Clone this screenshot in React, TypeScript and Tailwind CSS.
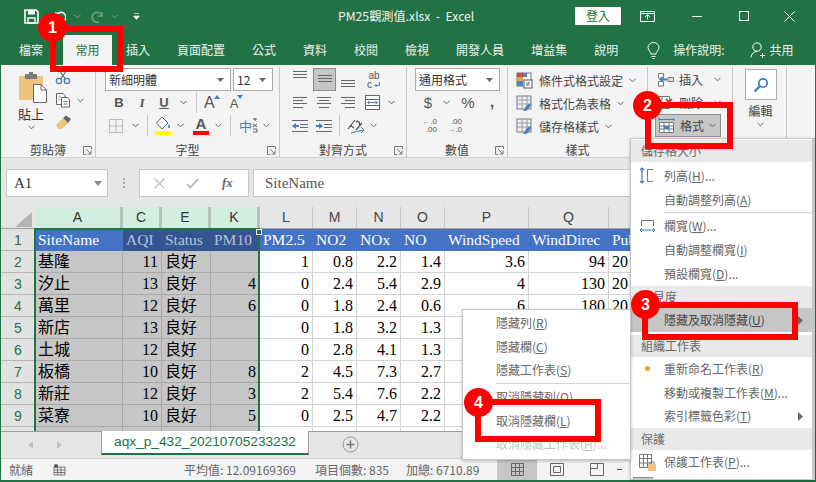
import type { ReactNode } from 'react';

const rows = [
  ['基隆', '11', '良好', '', '1', '0.8', '2.2', '1.4', '3.6', '94', '20'],
  ['汐止', '13', '良好', '4', '0', '2.4', '5.4', '2.9', '4', '130', '20'],
  ['萬里', '12', '良好', '6', '0', '1.8', '2.4', '0.6', '6', '180', '20'],
  ['新店', '13', '良好', '', '0', '1.8', '3.2', '1.3', '', '', ''],
  ['土城', '12', '良好', '', '0', '2.8', '4.1', '1.3', '', '', ''],
  ['板橋', '10', '良好', '8', '2', '4.5', '7.3', '2.7', '', '', ''],
  ['新莊', '12', '良好', '3', '2', '5.4', '7.6', '2.2', '', '', ''],
  ['菜寮', '10', '良好', '5', '0', '2.5', '4.7', '2.2', '', '', ''],
  ['', '', '', '', '', '', '', '', '', '', ''],
];
const headers = ['SiteName', 'AQI', 'Status', 'PM10', 'PM2.5', 'NO2', 'NOx', 'NO', 'WindSpeed', 'WindDirec', 'Publ'];
const columns = ['A', 'C', 'E', 'K', 'L', 'M', 'N', 'O', 'P', 'Q', ''];
const gridCols = 'grid grid-cols-[34px_88px_39px_49px_49px_53px_44px_44px_44px_84px_80px_207px]';

function Chev({ className = '' }: { className?: string }) {
  return (
    <svg width="7" height="5" viewBox="0 0 7 5" className={`shrink-0 ${className}`}>
      <path d="M0.5 0.8 L3.5 3.8 L6.5 0.8" fill="none" stroke="#666" strokeWidth="1" />
    </svg>
  );
}

function Launcher() {
  return (
    <svg width="9" height="9" viewBox="0 0 9 9" className="shrink-0">
      <path d="M0.5 8.5 V0.5 H8.5 M0.5 8.5 H3 M8.5 0.5 V3 M3 3 L8 8 M8 4.5 V8 H4.5" fill="none" stroke="#777" />
    </svg>
  );
}

// horizontal text-align strokes: [x1, x2, y]
function Lines({ h = 23, r }: { h?: number; r: [number, number, number][] }) {
  return (
    <svg width="14" height={h} viewBox={`0 0 14 ${h}`} className="shrink-0">
      {r.map(([a, b, y], i) => (
        <line key={i} x1={a} x2={b} y1={y + 0.5} y2={y + 0.5} stroke="#666" />
      ))}
    </svg>
  );
}

function Group({ w, label, launcher, children }: { w: string; label?: string; launcher?: boolean; children: ReactNode }) {
  return (
    <div className={`${w} shrink-0 h-[90px] flex flex-col border-r border-[#c8c8c8] relative`}>
      <div className="h-[74px] shrink-0">{children}</div>
      <div className="flex-1 flex items-center justify-center text-[12px] text-[#444] pb-[1px]">{label}</div>
      {launcher && (
        <div className="absolute right-[3px] bottom-[2px]">
          <Launcher />
        </div>
      )}
    </div>
  );
}

function Combo({ w, text }: { w: string; text: string }) {
  return (
    <div className={`${w} h-[23px] bg-white border border-[#ababab] flex items-center justify-between pl-[3px] pr-[6px] text-[12px] text-[#333]`}>
      <span>{text}</span>
      <svg width="7" height="4" viewBox="0 0 7 4"><path d="M0 0 H7 L3.5 4 Z" fill="#666" /></svg>
    </div>
  );
}

function Sep() {
  return <div className="w-px h-[21px] bg-[#c8c8c8] shrink-0" />;
}

function ColorA({ color, big }: { color?: string; big?: boolean }) {
  return (
    <div className="relative flex flex-col items-center w-[16px] leading-none">
      <span className={`${big ? 'text-[15px]' : 'text-[13px]'} text-[#555] font-semibold font-['Liberation_Sans',sans-serif]`}>A</span>
      {color && <div className="w-[16px] h-[4px]" style={{ background: color }} />}
    </div>
  );
}

function StyleIcon({ variant }: { variant: number }) {
  return (
    <svg width="17" height="17" viewBox="0 0 17 17" className="shrink-0">
      <rect x="1" y="1" width="14" height="13" fill={variant === 0 ? '#fff' : '#eef2f8'} stroke="#777" />
      {variant === 0 ? (
        <>
          <rect x="1" y="1" width="6" height="4" fill="#c0504d" />
          <rect x="7" y="1" width="4" height="4" fill="#4a86c8" />
          <rect x="1" y="5" width="6" height="4" fill="#f0a030" />
          <rect x="1" y="9" width="6" height="5" fill="#4a86c8" />
          <rect x="8" y="8" width="8" height="8" fill="#fff" stroke="#555" />
          <path d="M10 11 H14 M10 13 H14 M13 10 L11 14" stroke="#555" strokeWidth="0.7" />
        </>
      ) : (
        <>
          <path d="M1 5 H15 M1 9 H15 M6 1 V14 M11 1 V14" stroke="#9a9a9a" />
          <path d="M7 16 L11 10 L15 8 L14 12 L10 16 Z" fill="#3f7fc0" />
        </>
      )}
    </svg>
  );
}

function Ribbon() {
  return (
    <div className="h-[93px] shrink-0 bg-[#f3f3f3] border-b border-[#d2d2d2] flex pt-[2px] text-[#444]">
      <Group w="w-[95px]" label="剪貼簿" launcher>
        <div className="flex pl-[17px] pt-[5px]">
          <div className="w-[36px] flex flex-col items-start">
            <svg width="30" height="31" viewBox="0 0 30 31">
              <rect x="1" y="4" width="24" height="24" rx="1" fill="#eec37f" />
              <rect x="7" y="2" width="12" height="5" fill="#7a7a7a" />
              <rect x="11" y="0" width="4" height="3" fill="#7a7a7a" />
              <path d="M15.5 12.5 H23 L28.5 18 V30.5 H15.5 Z" fill="#fff" stroke="#666" />
              <path d="M23 12.5 V18 H28.5" fill="none" stroke="#666" />
            </svg>
            <span className="text-[13px] leading-[16px] mt-[3px] text-[#333]">貼上</span>
            <Chev className="ml-[10px] mt-[3px]" />
          </div>
          <div className="flex flex-col gap-[7px] ml-[1px] -mt-[3px]">
            <svg width="16" height="16" viewBox="0 0 16 16">
              <circle cx="4" cy="12" r="2.6" fill="none" stroke="#3f7fc0" strokeWidth="1.4" />
              <circle cx="12" cy="12" r="2.6" fill="none" stroke="#3f7fc0" strokeWidth="1.4" />
              <path d="M5.5 10 L12 1 M10.5 10 L4 1" stroke="#666" strokeWidth="1.2" />
            </svg>
            <div className="flex items-center gap-[6px]">
              <svg width="16" height="16" viewBox="0 0 16 16">
                <path d="M1.5 1.5 H8 L10 3.5 V12.5 H1.5 Z" fill="#fff" stroke="#666" />
                <path d="M6.5 5.5 H12.5 L14.5 7.5 V15 H6.5 Z" fill="#fff" stroke="#666" />
                <path d="M8.5 9.5 H12.5 M8.5 12 H12.5 M3.5 5 H5.5 M3.5 8 H5" stroke="#3f7fc0" />
              </svg>
              <Chev />
            </div>
            <svg width="17" height="15" viewBox="0 0 17 15">
              <path d="M1 10 L8 3 L13 8 L7 14 L3 14 Z" fill="#eec37f" />
              <path d="M8 3 L11 0.5 L16 4 L13 8 Z" fill="#666" />
            </svg>
          </div>
        </div>
      </Group>
      <Group w="w-[184px]" label="字型" launcher>
        <div className="pl-[9px] pt-[1px]">
          <div className="flex gap-[2px]">
            <Combo w="w-[126px]" text="新細明體" />
            <Combo w="w-[40px]" text="12" />
          </div>
          <div className="flex items-center h-[23px] font-['Liberation_Sans',sans-serif] text-[#555]">
            <span className="w-[20px] ml-[4px] text-center font-bold text-[13px] leading-none">B</span>
            <span className="w-[22px] ml-[2px] text-center italic text-[13px] font-['Liberation_Serif',serif] font-bold leading-none">I</span>
            <span className="w-[22px] text-center underline font-semibold text-[13px] leading-none">U</span>
            <Chev className="ml-[5px]" />
            <div className="ml-[9px]"><Sep /></div>
            <div className="ml-[7px] flex items-start">
              <span className="text-[16px] leading-none">A</span>
              <svg width="6" height="4" viewBox="0 0 6 4" className="-ml-[1px]"><path d="M0 4 L3 0 L6 4 Z" fill="#3f7fc0" /></svg>
            </div>
            <div className="ml-[10px] flex items-start">
              <span className="text-[13px] leading-none mt-[2px]">A</span>
              <svg width="6" height="4" viewBox="0 0 6 4" className="-ml-[1px]"><path d="M0 0 L3 4 L6 0 Z" fill="#3f7fc0" /></svg>
            </div>
          </div>
          <div className="flex items-center h-[23px]">
            <svg width="14" height="14" viewBox="0 0 14 14" className="ml-[4px]">
              <path d="M0.5 0.5 H13.5 V13.5 H0.5 Z M7 0.5 V13.5 M0.5 7 H13.5" fill="none" stroke="#888" strokeDasharray="1 1" />
            </svg>
            <Chev className="ml-[9px]" />
            <div className="ml-[8px]"><Sep /></div>
            <div className="ml-[7px] w-[16px] flex flex-col items-center">
              <svg width="16" height="15" viewBox="0 0 16 15">
                <path d="M7 1 L13 7 L7 13 L1.5 7 Z" fill="#fff" stroke="#666" />
                <path d="M14 8 C15.5 10 15.5 12 14 12 C12.8 12 12.8 10 14 8 Z" fill="#3f7fc0" />
              </svg>
              <div className="w-[16px] h-[4px] bg-[#ffff00]" />
            </div>
            <Chev className="ml-[6px]" />
            <div className="ml-[9px]"><ColorA color="#ff0000" big /></div>
            <Chev className="ml-[6px]" />
            <div className="ml-[8px]"><Sep /></div>
            <span className="ml-[8px] text-[13px] text-[#3f7fc0] leading-none">中</span>
            <svg width="6" height="15" viewBox="0 0 6 15" className="shrink-0">
              <path d="M1 1 H5 M3 0 V3 M1 6 L5 9 M5 6 L1 9 M1 11 H5 V14 H1" fill="none" stroke="#555" strokeWidth="0.9" />
            </svg>
            <Chev className="ml-[5px]" />
          </div>
        </div>
      </Group>
      <Group w="w-[127px]" label="對齊方式" launcher>
        <div className="pl-[13px] pt-[1px]">
          <div className="flex items-start h-[23px]">
            <Lines r={[[0, 14, 3], [0, 14, 6], [0, 14, 9]]} />
            <div className="ml-[6px] w-[23px] h-[23px] bg-[#c6c6c6] border border-[#8e8e8e] flex justify-center">
              <Lines h={21} r={[[0, 14, 6], [0, 14, 9], [0, 14, 12]]} />
            </div>
            <div className="ml-[5px]"><Lines r={[[0, 14, 12], [0, 14, 15], [0, 14, 18]]} /></div>
            <div className="ml-[12px] mt-[3px] w-[14px] flex flex-col items-center font-['Liberation_Sans',sans-serif] text-[#555] text-[10px] leading-[9px]">
              <span>ab</span>
              <span className="flex items-center self-start">
                c
                <svg width="6" height="6" viewBox="0 0 6 6" className="ml-[2px]"><path d="M5.5 0 V3.5 H1 M2.5 2 L1 3.5 L2.5 5" fill="none" stroke="#3f7fc0" /></svg>
              </span>
            </div>
          </div>
          <div className="flex items-center h-[23px]">
            <Lines r={[[0, 14, 6], [0, 10, 9], [0, 14, 12], [0, 10, 16]]} />
            <div className="ml-[10px]"><Lines r={[[0, 14, 6], [2, 12, 9], [0, 14, 12], [2, 12, 16]]} /></div>
            <div className="ml-[10px]"><Lines r={[[0, 14, 6], [4, 14, 9], [0, 14, 12], [4, 14, 16]]} /></div>
            <svg width="15" height="15" viewBox="0 0 15 15" className="ml-[10px]">
              <rect x="0.5" y="0.5" width="14" height="14" fill="#fff" stroke="#666" />
              <path d="M0.5 4.5 H14.5 M0.5 10.5 H14.5" stroke="#666" />
              <path d="M2.5 7.5 H12.5 M2.5 7.5 L4.5 6 M2.5 7.5 L4.5 9 M12.5 7.5 L10.5 6 M12.5 7.5 L10.5 9" stroke="#3f7fc0" />
            </svg>
            <Chev className="ml-[8px]" />
          </div>
          <div className="flex items-center h-[23px] -ml-[1px]">
            <svg width="16" height="14" viewBox="0 0 16 14">
              <path d="M0 1.5 H16 M8 5.5 H16 M8 8.5 H16 M0 12.5 H16" stroke="#666" />
              <path d="M0 7 L4 4 V10 Z M4 6 H7 V8 H4 Z" fill="#3f7fc0" />
            </svg>
            <svg width="16" height="14" viewBox="0 0 16 14" className="ml-[8px]">
              <path d="M0 1.5 H16 M8 5.5 H16 M8 8.5 H16 M0 12.5 H16" stroke="#666" />
              <path d="M7 7 L3 4 V10 Z M0 6 H3 V8 H0 Z" fill="#3f7fc0" />
            </svg>
            <div className="ml-[7px]"><Sep /></div>
            <svg width="18" height="16" viewBox="0 0 18 16" className="ml-[7px]">
              <path d="M1 11 L8 2 M3 7 L7 10 M9 12 L15 5 M9 4 A 2 2 0 1 1 12 7" fill="none" stroke="#555" strokeWidth="1.2" />
              <path d="M4 15 L16 12 M14 9 L17 12 L14 15" fill="none" stroke="#3f7fc0" />
            </svg>
            <Chev className="ml-[5px]" />
          </div>
        </div>
      </Group>
      <Group w="w-[101px]" label="數值" launcher>
        <div className="pl-[8px] pt-[1px]">
          <Combo w="w-[85px]" text="通用格式" />
          <div className="flex items-center h-[23px] font-['Liberation_Sans',sans-serif] text-[#555]">
            <span className="w-[20px] ml-[3px] text-center text-[15px] leading-none">$</span>
            <Chev className="ml-[5px]" />
            <span className="ml-[8px] w-[20px] text-center text-[15px] leading-none">%</span>
            <span className="ml-[12px] text-[15px] font-bold leading-none -mt-[3px]">,</span>
          </div>
          <div className="flex items-center h-[23px] font-['Liberation_Sans',sans-serif] text-[8px] leading-[8px] text-[#555]">
            <div className="ml-[6px] w-[16px] flex flex-col items-end"><span><span className="text-[#3f7fc0]">←</span>.0</span><span>.00</span></div>
            <div className="ml-[9px] w-[16px] flex flex-col items-end"><span>.00</span><span><span className="text-[#3f7fc0]">→</span>.0</span></div>
          </div>
        </div>
      </Group>
      <Group w="w-[140px]" label="樣式">
        <div className="pl-[8px] pt-[2px] text-[12px] text-[#444]">
          {[['條件式格式設定', 0], ['格式化為表格', 1], ['儲存格樣式', 2]].map(([t, v]) => (
            <div key={t} className="flex items-center h-[23px] gap-[5px]">
              <StyleIcon variant={v as number} />
              <span className="ml-[1px]">{t}</span>
              <Chev className="ml-[1px]" />
            </div>
          ))}
        </div>
      </Group>
      <Group w="w-[85px]">
        <div className="pl-[10px] pt-[1px] text-[12px] text-[#444]">
          <div className="flex items-center h-[23px] -ml-[1px]">
            <svg width="17" height="15" viewBox="0 0 17 15">
              <path d="M1.5 1.5 H6.5 V6 H1.5 Z M1.5 9.5 H6.5 V14 H1.5 Z" fill="#fff" stroke="#777" />
              <path d="M11 5.5 H16.5 V9.5 H11 Z" fill="#ddd" stroke="#777" />
              <path d="M2 7.5 L6 4.5 V6.5 H10 V8.5 H6 V10.5 Z" fill="#3f7fc0" />
            </svg>
            <span className="ml-[5px]">插入</span>
            <Chev className="ml-[11px]" />
          </div>
          <div className="flex items-center h-[23px] -ml-[1px]">
            <svg width="17" height="15" viewBox="0 0 17 15">
              <path d="M1.5 1.5 H12.5 V13.5 H1.5 Z M5 1.5 V13.5" fill="#fff" stroke="#777" />
              <path d="M9 4 L15 10 M15 4 L9 10" stroke="#d04030" strokeWidth="2" />
            </svg>
            <span className="ml-[5px]">刪除</span>
            <Chev className="ml-[11px]" />
          </div>
          <div className="flex items-center h-[23px] w-[66px] bg-[#c6c6c6] border border-[#8e8e8e] -ml-[3px] pl-[2px]">
            <svg width="17" height="16" viewBox="0 0 17 16">
              <path d="M1.5 4.5 H15.5 V14.5 H1.5 Z M1.5 8 H15.5 M1.5 11 H15.5 M6 4.5 V14.5 M11 4.5 V14.5" fill="#fff" stroke="#777" />
              <path d="M1 1.5 H16 M1 0 V3 M16 0 V3" stroke="#3f7fc0" />
              <rect x="6" y="8" width="5" height="3" fill="#3f7fc0" />
            </svg>
            <span className="ml-[5px]">格式</span>
            <Chev className="ml-[5px]" />
          </div>
        </div>
      </Group>
      <Group w="w-[54px]">
        <div className="pl-[11px] pt-[2px] flex flex-col items-center w-[44px] text-[12px] text-[#444]">
          <div className="w-[32px] h-[31px] bg-white border border-[#ababab] flex items-center justify-center">
            <svg width="16" height="16" viewBox="0 0 16 16">
              <circle cx="10" cy="6" r="4.2" fill="none" stroke="#3f7fc0" strokeWidth="1.8" />
              <path d="M7 9 L1.5 14.5" stroke="#3f7fc0" strokeWidth="2.4" />
            </svg>
          </div>
          <span className="mt-[3px] leading-[16px]">編輯</span>
          <Chev className="mt-[3px]" />
        </div>
      </Group>
    </div>
  );
}

function MenuItem({ icon, children, arrow, active }: { icon?: ReactNode; children: ReactNode; arrow?: boolean; active?: boolean }) {
  return (
    <div className={`h-[23.7px] flex items-center relative pl-[33px] text-[12px] ${active ? 'bg-[#c6c6c6] text-[#444]' : 'text-[#666]'}`}>
      {icon && <div className="absolute left-[2px] top-0 h-full w-[28px] flex items-center justify-center">{icon}</div>}
      {children}
      {arrow && (
        <svg width="5" height="9" viewBox="0 0 5 9" className="absolute right-[9px]"><path d="M0 0 L5 4.5 L0 9 Z" fill="#666" /></svg>
      )}
    </div>
  );
}

function MenuHeader({ children }: { children: ReactNode }) {
  return <div className="h-[22px] flex items-center pl-[10px] bg-[#e9e9e9] text-[12px] text-[#666]">{children}</div>;
}

function U({ children }: { children: string }) {
  return <span className="underline">{children}</span>;
}

function Callout({ n, pos }: { n: number; pos: string }) {
  return (
    <div className={`absolute ${pos} w-[29px] h-[29px] rounded-full bg-[#fe0000] text-white flex items-center justify-center text-[16px] font-bold font-['Liberation_Sans',sans-serif]`}>
      {n}
    </div>
  );
}

export default function App() {
  return (
    <div className="relative w-[816px] h-[482px] overflow-hidden bg-[#217346] font-['Noto_Sans_CJK_TC','Noto_Sans',sans-serif] flex flex-col pl-px pr-px pb-[2px]">
      {/* title bar */}
      <div className="h-[32px] shrink-0 flex items-center relative text-white">
        <svg width="15" height="15" viewBox="0 0 15 15" className="ml-[23px]">
          <path d="M1 1 H12 L14 3 V14 H1 Z" fill="none" stroke="#fff" strokeWidth="1.6" />
          <rect x="4" y="1" width="7" height="4.5" fill="#fff" />
          <rect x="4" y="9" width="7" height="5" fill="none" stroke="#fff" strokeWidth="1.4" />
        </svg>
        <svg width="13" height="13" viewBox="0 0 13 13" className="ml-[14px]">
          <path d="M3 2 V6 H7 M3 6 A5 5 0 1 1 6 12" fill="none" stroke="#fff" strokeWidth="1.6" opacity="0.9" />
        </svg>
        <Chev className="ml-[8px] invert" />
        <svg width="14" height="13" viewBox="0 0 14 13" className="ml-[10px]">
          <path d="M11 2 V6 H7 M11 6 A5 5 0 1 0 8 12" fill="none" stroke="#6ba283" strokeWidth="1.6" />
        </svg>
        <svg width="7" height="5" viewBox="0 0 7 5" className="ml-[6px]"><path d="M0.5 0.8 L3.5 3.8 L6.5 0.8" fill="none" stroke="#6ba283" /></svg>
        <svg width="7" height="7" viewBox="0 0 7 7" className="ml-[15px]"><path d="M1 0.5 H6 M0.5 3 H6.5 L3.5 6.5 Z" fill="#fff" stroke="#fff" strokeWidth="0.6" /></svg>
        <span className="ml-[198px] text-[12.2px] whitespace-pre text-[#f0f0f0] w-[237px]">PM25觀測值.xlsx  -  Excel</span>
        <div className="w-[46px] h-[18px] bg-white text-[#217346] text-[12px] flex items-center justify-center rounded-[1px]">登入</div>
        <svg width="15" height="11" viewBox="0 0 15 11" className="ml-[19px]">
          <path d="M0.5 0.5 H14.5 V10.5 H0.5 Z M0.5 2.5 H14.5" fill="none" stroke="#fff" />
          <path d="M5 6 L7.5 3.5 L10 6 M7.5 4 V8.5" fill="none" stroke="#fff" />
        </svg>
        <div className="ml-[37px] w-[10px] h-px bg-white" />
        <div className="ml-[37px] w-[10px] h-[10px] border border-white" />
        <svg width="11" height="11" viewBox="0 0 11 11" className="ml-[35px]"><path d="M0.5 0.5 L10.5 10.5 M10.5 0.5 L0.5 10.5" stroke="#fff" /></svg>
      </div>
      {/* tabs */}
      <div className="h-[33px] shrink-0 flex items-end text-[12px] text-white">
        <div className="h-[30px] flex items-center ml-[18px] text-[#f2f2f2]">檔案</div>
        <div className="h-[30px] w-[49px] ml-[20px] bg-[#f3f3f3] text-[#217346] flex items-center justify-center">常用</div>
        <div className="flex h-[30px] items-center gap-[27px] ml-[14px] text-[#f2f2f2]">
          {['插入', '頁面配置', '公式', '資料', '校閱', '檢視', '開發人員', '增益集', '說明'].map((t) => (
            <span key={t}>{t}</span>
          ))}
        </div>
        <div className="h-[30px] flex items-center ml-[29px]">
          <svg width="13" height="17" viewBox="0 0 13 17">
            <path d="M4 12 C4 9.5 1 8.5 1 5.5 A5.5 5 0 0 1 12 5.5 C12 8.5 9 9.5 9 12 Z M4.5 14.5 H8.5 M5.5 16.5 H7.5" fill="none" stroke="#fff" />
          </svg>
          <span className="ml-[13px] text-[#f2f2f2]">操作說明:</span>
          <svg width="17" height="17" viewBox="0 0 17 17" className="ml-[25px]">
            <circle cx="7" cy="5" r="4.2" fill="none" stroke="#fff" />
            <path d="M1 15.5 C1.5 11.5 4 9.5 7 9.5 M12.5 11 V16 M10 13.5 H15" fill="none" stroke="#fff" />
          </svg>
          <span className="ml-[3px] text-[#f2f2f2]">共用</span>
        </div>
      </div>
      <Ribbon />
      {/* formula bar */}
      <div className="h-[49px] shrink-0 bg-[#e6e6e6] flex items-start pt-[11px] pl-[5px] font-['Liberation_Serif','Noto_Sans_CJK_TC',serif]">
        <div className="w-[102px] h-[28px] bg-white border border-[#c6c6c6] flex items-center justify-between pl-[7px] pr-[5px] text-[15px] text-[#333]">
          A1
          <svg width="8" height="5" viewBox="0 0 8 5"><path d="M0 0 H8 L4 5 Z" fill="#888" /></svg>
        </div>
        <div className="ml-[15px] mt-[9px] flex flex-col gap-[2px]">
          <div className="w-[2px] h-[2px] bg-[#aaa]" />
          <div className="w-[2px] h-[2px] bg-[#aaa]" />
          <div className="w-[2px] h-[2px] bg-[#aaa]" />
        </div>
        <div className="ml-[14px] w-[110px] h-[28px] bg-white border border-[#c6c6c6] flex items-center pl-[14px]">
          <svg width="11" height="11" viewBox="0 0 11 11"><path d="M0.5 0.5 L10.5 10.5 M10.5 0.5 L0.5 10.5" stroke="#c0c0c0" strokeWidth="1.4" /></svg>
          <svg width="13" height="11" viewBox="0 0 13 11" className="ml-[21px]"><path d="M1 6 L4.5 9.5 L12 1" fill="none" stroke="#c0c0c0" strokeWidth="2" /></svg>
          <span className="ml-[23px] italic font-bold text-[13px] text-[#666]">fx</span>
        </div>
        <div className="ml-[4px] flex-1 h-[28px] bg-white border border-[#c6c6c6] flex items-center pl-[11px] text-[15px] text-[#555]">SiteName</div>
      </div>
      {/* sheet */}
      <div className="h-[224px] shrink-0 bg-white overflow-hidden relative font-['Liberation_Serif','Noto_Sans_CJK_TC',serif] -ml-px border-l border-[#217346]">
        <div className={`${gridCols} h-[22px] bg-[#e6e6e6] border-b border-[#9f9f9f] font-['Liberation_Sans',sans-serif] text-[14px] text-[#444]`}>
          <div className="flex items-end justify-end pr-[3px] pb-[1px]">
            <svg width="17" height="15" viewBox="0 0 17 15"><path d="M17 0 V15 H0 Z" fill="#b5b5b5" /></svg>
          </div>
          {columns.map((c, i) => (
            <div key={i} className={`flex items-center justify-center border-r ${i < 4 ? 'bg-[#d2eee0] border-r-[3px] border-[#b4c4bb] text-[#333]' : 'border-[#c6c6c6]'}`}>
              {c}
            </div>
          ))}
        </div>
        <div className={`${gridCols} h-[22px] text-[15.5px] leading-none`}>
          <div className="bg-[#e2e2e2] border-b border-[#b5b5b5] flex items-center justify-center text-[#217346] text-[14px] font-['Liberation_Sans',sans-serif]">1</div>
          {headers.map((h, i) => (
            <div key={h} className={`flex items-center pl-[3px] whitespace-nowrap overflow-hidden ${i === 0 ? 'bg-[#4472c4] text-white' : i < 4 ? 'bg-[#34558f] text-[#b6c2d8]' : 'bg-[#4472c4] text-white'}`}>
              {h}
            </div>
          ))}
        </div>
        {rows.map((r, y) => (
          <div key={y} className={`${gridCols} h-[22px] text-[16px] leading-none`}>
            <div className="bg-[#e2e2e2] border-b border-[#b5b5b5] flex items-center justify-center text-[#217346] text-[14px] font-['Liberation_Sans',sans-serif]">{y < 8 ? y + 2 : ''}</div>
            {r.map((v, x) => (
              <div
                key={x}
                className={`flex items-center border-b border-r px-[3px] text-black ${x === 0 || x === 2 || x === 10 ? 'justify-start' : 'justify-end'} ${x < 4 ? 'bg-[#c6c6c6] border-[#a9a9a9]' : 'border-[#d4d4d4]'}`}
              >
                {v}
              </div>
            ))}
          </div>
        ))}
        {/* selection outline */}
        <div className="absolute left-[33px] top-[21px] w-[226px] h-[210px] border-2 border-[#217346]" />
        <div className="absolute left-[255px] top-[22px] w-[6px] h-[6px] bg-[#217346] border border-white" />
      </div>
      {/* sheet tabs */}
      <div className="h-[27px] shrink-0 bg-[#e6e6e6] flex items-start border-t border-[#9f9f9f]">
        <svg width="5" height="8" viewBox="0 0 5 8" className="ml-[27px] mt-[9px]"><path d="M5 0 L0 4 L5 8 Z" fill="#c0c0c0" /></svg>
        <svg width="5" height="8" viewBox="0 0 5 8" className="ml-[24px] mt-[9px]"><path d="M0 0 L5 4 L0 8 Z" fill="#c0c0c0" /></svg>
        <div className="ml-[39px] w-[208px] h-[24px] -mt-px bg-white border-x border-[#9f9f9f] border-b-2 border-b-[#217346] flex items-center justify-center text-[#217346] text-[13.7px] font-['Liberation_Sans',sans-serif]">
          aqx_p_432_20210705233232
        </div>
        <svg width="17" height="17" viewBox="0 0 17 17" className="ml-[33px] mt-[4px]">
          <circle cx="8.5" cy="8.5" r="7.5" fill="none" stroke="#999" />
          <path d="M4.5 8.5 H12.5 M8.5 4.5 V12.5" stroke="#777" strokeWidth="1.5" />
        </svg>
      </div>
      {/* status bar */}
      <div className="h-[22px] shrink-0 bg-[#f3f3f3] flex items-center text-[12px] text-[#666] border-t border-[#d0d0d0]">
        <span className="ml-[8px] w-[35px]">就緒</span>
        <svg width="13" height="12" viewBox="0 0 13 12" className="ml-[9px]">
          <path d="M1 3 H12 V11 H1 Z M1 6 H12 M1 8.5 H12 M4.5 3 V11 M8 3 V11" fill="none" stroke="#777" />
          <circle cx="3" cy="2" r="2" fill="#555" />
        </svg>
        <span className="ml-[118px]">平均值: 12.09169369</span>
        <span className="ml-[19px]">項目個數: 835</span>
        <span className="ml-[17px]">加總: 6710.89</span>
        <div className="ml-[18px] w-[40px] h-full bg-[#c6c6c6] flex items-center justify-center">
          <svg width="13" height="13" viewBox="0 0 13 13"><path d="M0.5 0.5 H12.5 V12.5 H0.5 Z M4.5 0.5 V12.5 M8.5 0.5 V12.5 M0.5 4.5 H12.5 M0.5 8.5 H12.5" fill="none" stroke="#666" /></svg>
        </div>
        <svg width="14" height="13" viewBox="0 0 14 13" className="ml-[13px]"><path d="M0.5 0.5 H13.5 V12.5 H0.5 Z M3.5 3.5 H10.5 V9.5 H3.5 Z" fill="none" stroke="#666" /></svg>
        <svg width="14" height="13" viewBox="0 0 14 13" className="ml-[26px]"><path d="M0.5 0.5 H13.5 V12.5 H0.5 Z M0.5 5.5 H7.5 V0.5" fill="none" stroke="#666" /></svg>
        <div className="ml-[13px] w-[5px] h-px bg-[#555]" />
      </div>

      {/* format menu */}
      <div className="absolute left-[630px] top-[138px] w-[185px] h-[342px] overflow-hidden bg-white border border-r-[3px] border-[#c6c6c6] shadow-[0_1px_3px_rgba(0,0,0,0.25)] pt-px">
        <MenuHeader>儲存格大小</MenuHeader>
        <div className="h-[2px]" />
        <MenuItem icon={<svg width="16" height="17" viewBox="0 0 16 17"><path d="M3 1 V16 M1 3 L3 1 L5 3 M1 14 L3 16 L5 14" fill="none" stroke="#3f7fc0" strokeWidth="1.2" /><path d="M14 2.5 H8.5 V14.5 H14" fill="none" stroke="#777" /></svg>}>列高(<U>H</U>)...</MenuItem>
        <MenuItem>自動調整列高(<U>A</U>)</MenuItem>
        <div className="h-px bg-[#d6d6d6] ml-[33px] my-[1px]" />
        <MenuItem icon={<svg width="17" height="14" viewBox="0 0 17 14"><path d="M2.5 7 V1.5 H14.5 V7" fill="none" stroke="#777" /><path d="M1 11 H16 M3 9 L1 11 L3 13 M14 9 L16 11 L14 13" fill="none" stroke="#3f7fc0" /></svg>}>欄寬(<U>W</U>)...</MenuItem>
        <MenuItem>自動調整欄寬(<U>I</U>)</MenuItem>
        <MenuItem>預設欄寬(<U>D</U>)...</MenuItem>
        <div className="h-px" />
        <MenuHeader>可見度</MenuHeader>
        <MenuItem active arrow>隱藏及取消隱藏(<U>U</U>)</MenuItem>
        <div className="h-[3px]" />
        <MenuHeader>組織工作表</MenuHeader>
        <MenuItem icon={<div className="w-[5px] h-[5px] rounded-full bg-[#f09a28]" />}>重新命名工作表(<U>R</U>)</MenuItem>
        <MenuItem>移動或複製工作表(<U>M</U>)...</MenuItem>
        <MenuItem arrow>索引標籤色彩(<U>T</U>)</MenuItem>
        <MenuHeader>保護</MenuHeader>
        <MenuItem icon={<svg width="19" height="19" viewBox="0 0 19 19"><path d="M1.5 1.5 H13.5 V14.5 H1.5 Z M1.5 5.5 H13.5 M1.5 10 H13.5 M5.5 1.5 V14.5 M9.5 1.5 V14.5" fill="#fff" stroke="#777" /><rect x="10" y="11" width="8" height="7" fill="#eec37f" /><path d="M12 11 V9 H16 V11" fill="none" stroke="#777" /></svg>}>保護工作表(<U>P</U>)...</MenuItem>
        <div className="ml-[2px] mt-[3px] w-[20px] h-[16px] bg-[#c6c6c6] border border-[#8e8e8e]" />
      </div>

      {/* unhide submenu */}
      <div className="absolute left-[462px] top-[309px] w-[169px] h-[151px] bg-white border border-[#c6c6c6] shadow-[0_1px_3px_rgba(0,0,0,0.25)] pt-px">
        <MenuItem>隱藏列(<U>R</U>)</MenuItem>
        <MenuItem>隱藏欄(<U>C</U>)</MenuItem>
        <MenuItem>隱藏工作表(<U>S</U>)</MenuItem>
        <div className="h-px bg-[#d6d6d6] ml-[33px] my-[1px]" />
        <MenuItem>取消隱藏列(<U>O</U>)</MenuItem>
        <MenuItem>取消隱藏欄(<U>L</U>)</MenuItem>
        <div className="opacity-40"><MenuItem>取消隱藏工作表(<U>H</U>)...</MenuItem></div>
      </div>

      {/* tutorial marks */}
      <div className="absolute left-[50px] top-[26px] w-[73px] h-[46px] border-[6px] border-[#ff0000]" />
      <div className="absolute left-[645px] top-[102px] w-[88px] h-[47px] border-[6px] border-[#ff0000]" />
      <div className="absolute left-[642px] top-[302px] w-[156px] h-[38px] border-[6px] border-[#ff0000]" />
      <div className="absolute left-[475px] top-[399px] w-[126px] h-[43px] border-[6px] border-[#ff0000]" />
      <Callout n={1} pos="left-[38px] top-[13px]" />
      <Callout n={2} pos="left-[633px] top-[91px]" />
      <Callout n={3} pos="left-[631px] top-[290px]" />
      <Callout n={4} pos="left-[464px] top-[388px]" />
    </div>
  );
}
